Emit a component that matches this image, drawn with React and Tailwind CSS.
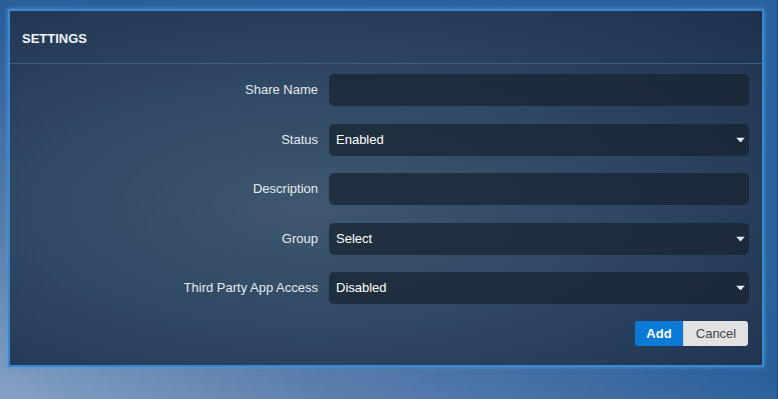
import React from "react";

function Caret() {
  return (
    <svg width="9" height="5" viewBox="0 0 9 5" className="absolute right-[4px] top-1/2 -translate-y-1/2">
      <path d="M0 0 L9 0 L4.5 5 Z" fill="#e8eef5" />
    </svg>
  );
}

function Field({ value, select }) {
  return (
    <div className="relative h-8 rounded-[5px] bg-[#17222f]/70 flex items-center pl-[7px] text-[13px] text-white">
      {value}
      {select && <Caret />}
    </div>
  );
}

export default function App() {
  const rows = [
    { label: "Share Name", value: "", select: false },
    { label: "Status", value: "Enabled", select: true },
    { label: "Description", value: "", select: false },
    { label: "Group", value: "Select", select: true },
    { label: "Third Party App Access", value: "Disabled", select: true },
  ];
  return (
    <div
      className="w-[778px] h-[399px] overflow-hidden bg-[linear-gradient(205deg,#2a62a0_0%,#2a5f9a_50%,#5d80ad_80%,#86a1c5_100%)] pt-[9px] pl-[8px] border-r border-r-[#1f4a78]"
      style={{ fontFamily: '"Liberation Sans", Arial, sans-serif' }}
    >
      <div className="w-[756px] h-[358px] border-2 border-[#3c86cf] shadow-[0_0_4px_#4a9ae0] bg-[radial-gradient(ellipse_at_40%_55%,#3f5870_0%,#2f4863_45%,#1d314d_100%)] flex flex-col">
        <div className="h-[53px] flex items-center pl-[12px] border-b border-[#3d5d80] shrink-0">
          <span className="text-[13px] font-bold text-[#f2f4f7] mt-[4px]">SETTINGS</span>
        </div>
        <div className="pt-[10px] pr-[13px] grid grid-cols-[308px_1fr] gap-x-[11px] gap-y-[17.5px]">
          {rows.map((r) => (
            <React.Fragment key={r.label}>
              <div className="flex items-center justify-end text-[13px] text-[#e6e9ee]">{r.label}</div>
              <Field value={r.value} select={r.select} />
            </React.Fragment>
          ))}
        </div>
        <div className="flex justify-end pr-[14px] mt-[17px]">
          <button className="w-[48px] h-[25px] bg-[#0a7ad6] text-white text-[13px] font-bold rounded-l-[3px]">Add</button>
          <button className="w-[65px] h-[25px] bg-[#e2e2e2] text-[#444] text-[13px] rounded-r-[3px] border-l border-[#cfcfcf]">Cancel</button>
        </div>
      </div>
    </div>
  );
}
